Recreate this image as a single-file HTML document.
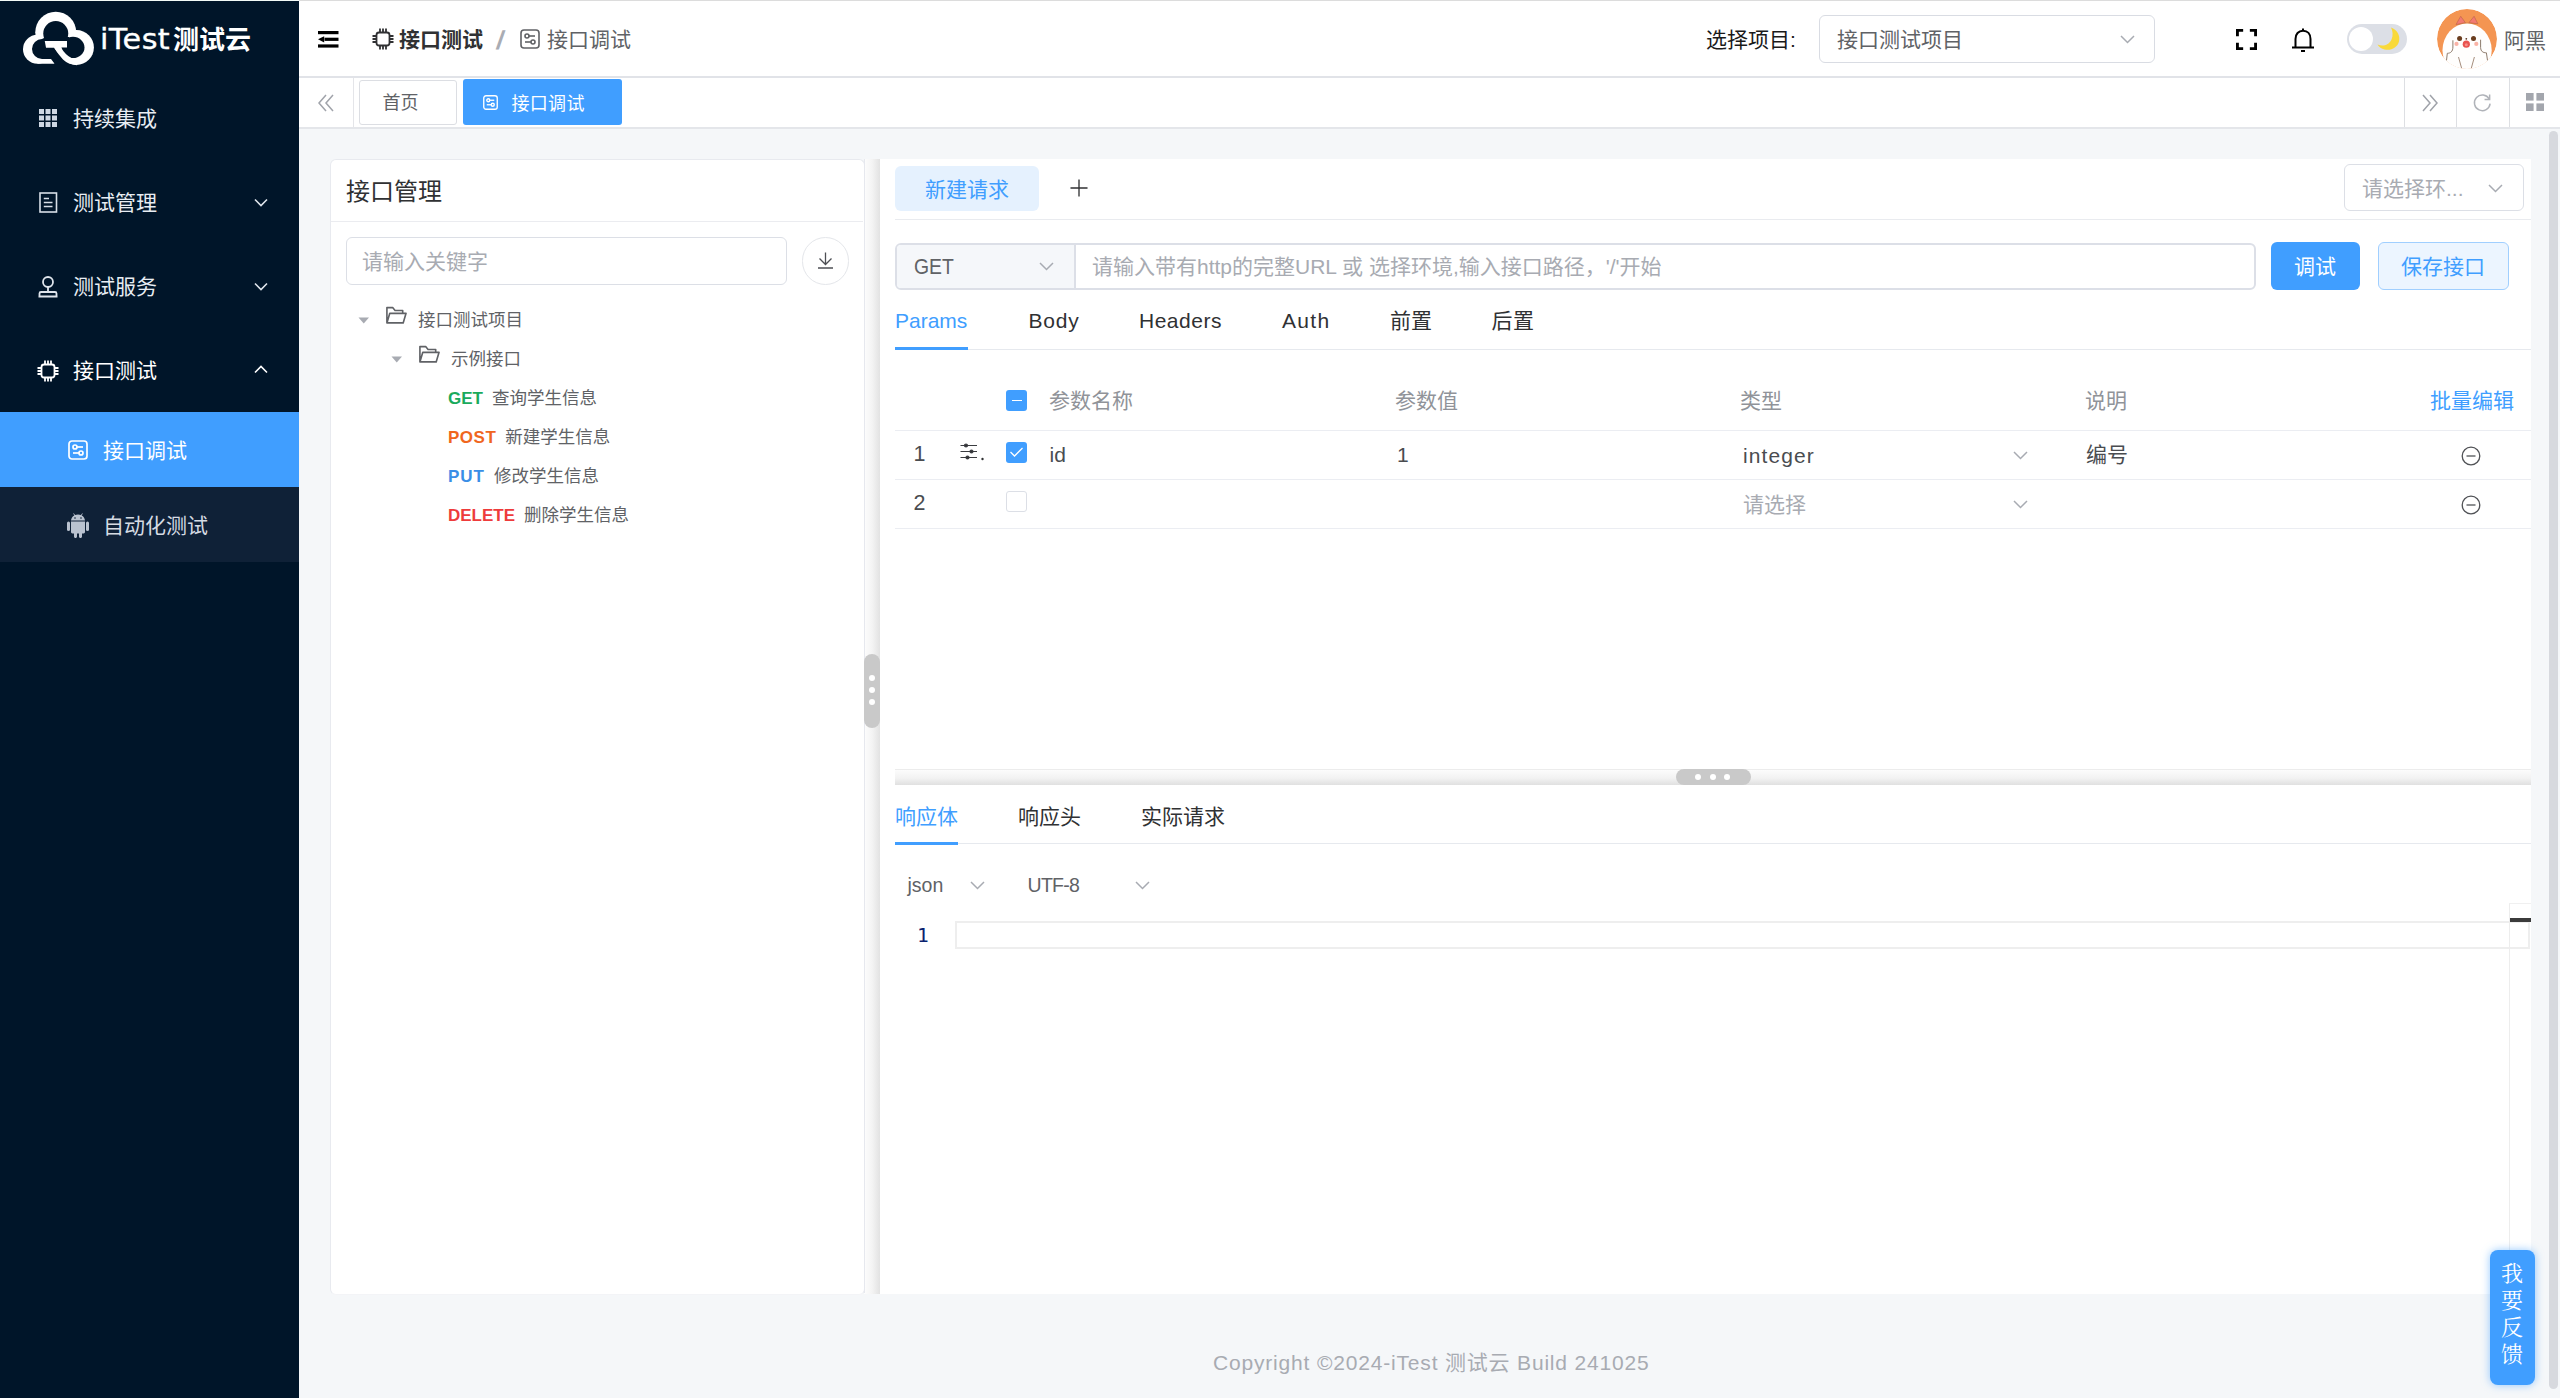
<!DOCTYPE html>
<html lang="zh-CN">
<head>
<meta charset="utf-8">
<title>iTest测试云 - 接口调试</title>
<style>
*{box-sizing:border-box;margin:0;padding:0}
html,body{width:2560px;height:1398px;overflow:hidden;background:#f5f7f9}
body{font-family:"Liberation Sans","Noto Sans CJK SC",sans-serif;font-size:21px;color:#606266;position:relative}
.abs{position:absolute}
.t{position:absolute;white-space:nowrap;line-height:1;}
svg{display:block;position:absolute;overflow:visible}
/* sidebar */
#side{position:absolute;left:0;top:0;width:299px;height:1398px;background:#001529}
#side .mi{position:absolute;left:0;width:299px;height:84px;color:#e8edf3;font-size:21px}
#side .mi .t{left:73px;top:32.300px}
#side .sub{position:absolute;left:0;width:299px;height:75px;background:#0f2137;color:#fff;font-size:21px}
#side .sub .t{left:103px;top:28.300px}
#side .sub.on{background:#409eff}
/* header */
#head{position:absolute;left:299px;top:0;width:2261px;height:77.500px;background:#fff;border-bottom:2px solid #e1e3e8}
#tabs{position:absolute;left:299px;top:77.500px;width:2261px;height:51.500px;background:#fff;border-bottom:2px solid #e4e6ea}

/* main */
#lcard{position:absolute;left:330px;top:159px;width:535px;height:1135.500px;background:#fff;border:1.500px solid #e8eaef;border-bottom-color:#f3f4f7;border-radius:6px}
#split{position:absolute;left:864px;top:159px;width:16px;height:1134.700px;background:linear-gradient(90deg,#fdfdfd 0%,#f4f4f4 50%,#e2e2e2 100%)}
#rp{position:absolute;left:880px;top:159px;width:1651px;height:1134.700px;background:#fff}
.tree{font-size:17.500px;color:#606266}
.tree b{font-size:17px}
.tree span{margin-left:8.500px}
.hl{position:absolute;height:1.500px;background:#e4e7ed}
.chev{fill:none;stroke:#a8abb2;stroke-width:1.500}
.mc{fill:none;stroke:#505256;stroke-width:1.300}
</style>
</head>
<body>
<!-- SIDEBAR -->
<div id="side">
  <!-- logo cloud -->
  <svg style="left:16px;top:4px" width="90" height="70" viewBox="0 0 90 70">
    <g fill="#fff"><circle cx="21.500" cy="45.300" r="14.500"/><circle cx="39.750" cy="28.250" r="20.500"/><circle cx="60.500" cy="43.500" r="17.400"/><path d="M21.500 50H35L38.600 59.800H21.500Z"/></g>
    <g fill="#001529"><circle cx="39.750" cy="29.500" r="12.500"/><path d="M16 45A10 10 0 0 1 26 35L30 33V43.500H38L42.500 50L47 55.500L52.500 59L50 62L38.600 59.800L35 55H26A10 10 0 0 1 16 45Z"/><ellipse cx="57" cy="43.400" rx="11.500" ry="10.600"/><path d="M45 33H53V38H45Z"/></g>
    <g fill="#fff"><path d="M28.750 37H51V43.500H30Z"/><path d="M38 43.400H45Q49 50.500 55.500 54L61 61.200Q52 60.500 47 55.500Q42 50 38 43.400Z"/></g>
  </svg>
  <div class="t" id="logotxt" style="left:100px;top:25.500px;color:#fff;font-size:26px"><span style="display:inline-block;font-family:'DejaVu Sans','Liberation Sans',sans-serif;font-size:27.500px;letter-spacing:0.400px;transform:scaleX(1.100);transform-origin:0 50%;-webkit-text-stroke:0.350px #fff">iTest</span><b style="margin-left:9.300px">测试云</b></div>

  <div class="mi" style="top:76px">
    <svg style="left:39px;top:33px" width="18" height="18" viewBox="0 0 18 18" fill="#cfd8e3"><rect x="0" y="0" width="5" height="5"/><rect x="6.500" y="0" width="5" height="5"/><rect x="13" y="0" width="5" height="5"/><rect x="0" y="6.500" width="5" height="5"/><rect x="6.500" y="6.500" width="5" height="5"/><rect x="13" y="6.500" width="5" height="5"/><rect x="0" y="13" width="5" height="5"/><rect x="6.500" y="13" width="5" height="5"/><rect x="13" y="13" width="5" height="5"/></svg>
    <div class="t">持续集成</div></div>
  <div class="mi" style="top:160px">
    <svg style="left:38.500px;top:31.500px" width="19" height="21" viewBox="0 0 19 21" fill="none" stroke="#d8dfe8" stroke-width="1.600"><rect x="1" y="1" width="16.500" height="19"/><path d="M4.800 6.500H10M4.800 10.500H13.500M4.800 14.500H13.500"/></svg>
    <div class="t">测试管理</div>
    <svg style="left:254px;top:38px" width="14" height="9" viewBox="0 0 14 9" fill="none" stroke="#dfe5ec" stroke-width="1.600"><path d="M1 1.500L7 7.500L13 1.500"/></svg></div>
  <div class="mi" style="top:244px">
    <svg style="left:38px;top:32px" width="20" height="22" viewBox="0 0 20 22" fill="none" stroke="#dfe5ec" stroke-width="1.800"><circle cx="10" cy="6" r="5"/><path d="M10 11V16M1.500 21V17.500C1.500 16.500 2 16 3 16H17C18 16 18.500 16.500 18.500 17.500V21M0.500 20.500H19.500"/></svg>
    <div class="t">测试服务</div>
    <svg style="left:254px;top:38px" width="14" height="9" viewBox="0 0 14 9" fill="none" stroke="#dfe5ec" stroke-width="1.600"><path d="M1 1.500L7 7.500L13 1.500"/></svg></div>
  <div class="mi" style="top:328px;color:#fff">
    <svg style="left:37px;top:32px" width="22" height="22" viewBox="0 0 22 22" fill="none" stroke="#fff" stroke-width="1.800"><rect x="4.500" y="4.500" width="13" height="13" rx="2.500"/><path d="M8 4V0.500M11 4V0.500M14 4V0.500M8 21.500V18M11 21.500V18M14 21.500V18M4 8H0.500M4 11H0.500M4 14H0.500M21.500 8H18M21.500 11H18M21.500 14H18"/></svg>
    <div class="t">接口测试</div>
    <svg style="left:254px;top:37px" width="14" height="9" viewBox="0 0 14 9" fill="none" stroke="#fff" stroke-width="1.600"><path d="M1 7.500L7 1.500L13 7.500"/></svg></div>
  <div class="sub on" style="top:412px">
    <svg style="left:68px;top:28px" width="20" height="20" viewBox="0 0 20 20" fill="none" stroke="#fff" stroke-width="1.700"><rect x="1" y="1" width="18" height="18" rx="3"/><circle cx="7" cy="7" r="2"/><path d="M9 7H15"/><circle cx="13" cy="13" r="2"/><path d="M5 13H11"/></svg>
    <div class="t">接口调试</div></div>
  <div class="sub" style="top:487px;color:#d5dbe3">
    <svg style="left:67px;top:26px" width="22" height="25" viewBox="0 0 22 25" fill="#b9c2cf"><path d="M4 8.500H18V19C18 19.800 17.400 20.400 16.600 20.400H15V23.500C15 24.300 14.400 25 13.500 25C12.600 25 12 24.300 12 23.500V20.400H10V23.500C10 24.300 9.400 25 8.500 25C7.600 25 7 24.300 7 23.500V20.400H5.400C4.600 20.400 4 19.800 4 19Z"/><path d="M4 7.500C4.200 5 5.500 3.300 7.300 2.400L6.200 0.600L6.800 0.200L8 2.100C8.900 1.800 9.900 1.600 11 1.600C12.100 1.600 13.100 1.800 14 2.100L15.200 0.200L15.800 0.600L14.700 2.400C16.500 3.300 17.800 5 18 7.500Z"/><rect x="0" y="8.500" width="3" height="9.500" rx="1.500"/><rect x="19" y="8.500" width="3" height="9.500" rx="1.500"/><circle cx="8" cy="5" r="0.800" fill="#0f2137"/><circle cx="14" cy="5" r="0.800" fill="#0f2137"/></svg>
    <div class="t">自动化测试</div></div>
</div>
<!-- HEADER -->
<div id="head">
  <!-- hamburger/fold -->
  <svg style="left:19.300px;top:31.200px" width="20.500" height="16.600" viewBox="0 0 20.500 16.600" fill="#000"><rect x="0" y="0" width="20.500" height="3.200"/><rect x="6.500" y="6.700" width="14" height="3.200"/><rect x="0" y="13.400" width="20.500" height="3.200"/><path d="M0 8.300L6.200 5.200V11.400Z"/></svg>
  <!-- breadcrumb -->
  <svg style="left:73px;top:28px" width="22" height="22" viewBox="0 0 22 22" fill="none" stroke="#303133" stroke-width="1.800"><rect x="4.500" y="4.500" width="13" height="13" rx="2.500"/><path d="M8 4V0.500M11 4V0.500M14 4V0.500M8 21.500V18M11 21.500V18M14 21.500V18M4 8H0.500M4 11H0.500M4 14H0.500M21.500 8H18M21.500 11H18M21.500 14H18"/></svg>
  <div class="t" style="left:100px;top:29px;font-weight:bold;color:#303133">接口测试</div>
  <div class="t" style="left:198px;top:27px;font-weight:bold;color:#a9acb3;font-size:26px;transform:skewX(-9deg)">/</div>
  <svg style="left:221px;top:29px" width="20" height="20" viewBox="0 0 20 20" fill="none" stroke="#606266" stroke-width="1.600"><rect x="1" y="1" width="18" height="18" rx="3"/><circle cx="7" cy="7" r="2"/><path d="M9 7H15"/><circle cx="13" cy="13" r="2"/><path d="M5 13H11"/></svg>
  <div class="t" style="left:248px;top:29px;color:#606266">接口调试</div>
  <!-- project select -->
  <div class="t" style="left:1407px;top:29px;color:#1a1a1a">选择项目:</div>
  <div class="abs" style="left:1520px;top:15px;width:336px;height:48px;border:1.500px solid #d9dce3;border-radius:6px;background:#fff"></div>
  <div class="t" style="left:1538px;top:29px;color:#606266">接口测试项目</div>
  <svg style="left:1821px;top:35px" width="15" height="9" viewBox="0 0 15 9" fill="none" stroke="#a8abb2" stroke-width="1.500"><path d="M1 1L7.500 7.500L14 1"/></svg>
  <!-- fullscreen -->
  <svg style="left:1937px;top:29px" width="21" height="21" viewBox="0 0 22 22" fill="none" stroke="#000" stroke-width="3"><path d="M1.500 7.500V1.500H7.500M14.500 1.500H20.500V7.500M20.500 14.500V20.500H14.500M7.500 20.500H1.500V14.500"/></svg>
  <!-- bell -->
  <svg style="left:1992px;top:27px" width="24" height="26" viewBox="0 0 24 26" fill="none" stroke="#000" stroke-width="2"><path d="M12 1.500V3.500M4.500 20V12C4.500 7 7.500 3.800 12 3.800C16.500 3.800 19.500 7 19.500 12V20M1 20.500H23M10 24H14"/></svg>
  <!-- switch -->
  <div class="abs" style="left:2048px;top:24px;width:60px;height:30px;border-radius:15px;background:#dcdfe6"></div>
  <div class="abs" style="left:2049.500px;top:27px;width:24px;height:24px;border-radius:12px;background:#fff"></div>
  <svg style="left:2078px;top:26px" width="26" height="26" viewBox="0 0 26 26"><path d="M14 1.500C20 3.500 23.500 9.500 22 15.500C20.500 21.500 14 25 7.500 23.500C4.500 22.800 2 21 0.500 18.500C6 21 12 19 14.500 13.500C16.300 9.500 15.800 5 14 1.500Z" fill="#f9d93a"/></svg>
  <!-- avatar -->
  <svg style="left:2138px;top:8.900px" width="60" height="60" viewBox="0 0 60 60">
    <defs><clipPath id="avc"><circle cx="30" cy="30" r="30"/></clipPath></defs>
    <g clip-path="url(#avc)">
      <circle cx="30" cy="30" r="30" fill="#f49552"/>
      <path d="M19 16L23.700 7.300L28.500 13.500L32 13.500L37.100 7.300L41 15Z" fill="#dd8546"/>
      <path d="M19 15.500L23.700 7.300L28.300 13.600ZM32 13.600L37.100 7.300L40.800 14.800Z" fill="#f37a72" stroke="#c66a4c" stroke-width="0.700" stroke-linejoin="round"/>
      <ellipse cx="30.100" cy="41.300" rx="24.600" ry="26.800" fill="#fffefd"/>
      <circle cx="22.600" cy="29.600" r="2.500" fill="#6b3d1e"/><circle cx="36.500" cy="29.600" r="2.500" fill="#6b3d1e"/>
      <circle cx="29.300" cy="29.800" r="0.900" fill="#5a3420"/>
      <circle cx="29.300" cy="35.200" r="3.600" fill="#e9534f"/><circle cx="29.300" cy="35.800" r="1.500" fill="#f58e86"/>
      <circle cx="19.500" cy="34.900" r="2.100" fill="#fab3a6"/><circle cx="39.300" cy="34.900" r="2.100" fill="#fab3a6"/>
      <path d="M15.900 31.300V38C15.900 42.500 13.500 44.300 10.300 44.300L9.500 51.400M43.600 30.700V38.500C43.800 42.500 46 43.800 49.400 43.800L50.500 51.400" fill="none" stroke="#8d7b6c" stroke-width="1"/>
      <path d="M21.500 48L24.600 59.200M37.400 48L34.300 59.200" fill="none" stroke="#a58d7c" stroke-width="1"/>
    </g>
  </svg>
  <div class="t" style="left:2205px;top:30px;color:#606266">阿黑</div>
</div>
<!-- TABBAR -->
<div id="tabs">
  <svg style="left:19.300px;top:16px" width="16" height="18" viewBox="0 0 16 18" fill="none" stroke="#a0a3aa" stroke-width="1.500"><path d="M8 1L1 9L8 17M15 1L8 9L15 17"/></svg>
  <div class="abs" style="left:53.500px;top:0;width:1.500px;height:49.500px;background:#e4e5e9"></div>
  <div class="abs" style="left:60px;top:2px;width:98px;height:45.500px;border:1.500px solid #dcdee3;border-radius:3px;background:#fff"></div>
  <div class="t" style="left:83.500px;top:16.500px;font-size:18px;color:#606266">首页</div>
  <div class="abs" style="left:164px;top:1.500px;width:159px;height:46px;border-radius:3px;background:#409eff"></div>
  <svg style="left:184px;top:17px" width="15" height="15" viewBox="0 0 20 20" fill="none" stroke="#fff" stroke-width="1.800"><rect x="1" y="1" width="18" height="18" rx="3"/><circle cx="7" cy="7" r="2"/><path d="M9 7H15"/><circle cx="13" cy="13" r="2"/><path d="M5 13H11"/></svg>
  <div class="t" style="left:212.500px;top:17px;font-size:18px;color:#fff;letter-spacing:0.300px">接口调试</div>
  <div class="abs" style="left:2105.200px;top:0;width:1.200px;height:49.500px;background:#dddfe3"></div>
  <div class="abs" style="left:2157.300px;top:0;width:1.200px;height:49.500px;background:#dddfe3"></div>
  <div class="abs" style="left:2210px;top:0;width:1.200px;height:49.500px;background:#dddfe3"></div>
  <svg style="left:2123px;top:16px" width="16" height="18" viewBox="0 0 16 18" fill="none" stroke="#a0a3aa" stroke-width="1.500"><path d="M1 1L8 9L1 17M8 1L15 9L8 17"/></svg>
  <svg style="left:2174px;top:15px" width="18.500" height="18.500" viewBox="0 0 20 20" fill="none" stroke="#b0b3b9" stroke-width="1.600"><path d="M17.500 6.500A8.500 8.500 0 1 0 18.500 11.500M18 1.500V7H12.500"/></svg>
  <svg style="left:2227.300px;top:15.500px" width="18" height="18" viewBox="0 0 18 18" fill="#a3a6ad"><rect x="0" y="0" width="7.600" height="7.600"/><rect x="10.400" y="0" width="7.600" height="7.600"/><rect x="0" y="10.400" width="7.600" height="7.600"/><rect x="10.400" y="10.400" width="7.600" height="7.600"/></svg>
</div>
<div class="abs" style="left:0;top:0;width:299px;height:1px;background:#f3faf7"></div><div class="abs" style="left:299px;top:0;width:2261px;height:1px;background:#dcdcdc"></div>
<!-- MAIN -->
<div id="main">
 <div id="lcard">
  <div class="t" style="left:15px;top:20px;font-size:24px;color:#303133">接口管理</div>
  <div class="hl" style="left:0;top:60.600px;width:532px;height:1.200px;background:#ebecf0"></div>
  <div class="abs" style="left:15px;top:77px;width:441px;height:47.500px;border:1.500px solid #dcdfe6;border-radius:6px"></div>
  <div class="t" style="left:31px;top:90.500px;color:#a8abb2">请输入关键字</div>
  <div class="abs" style="left:470.500px;top:77px;width:47.500px;height:47.500px;border:1.500px solid #e4e6ea;border-radius:24px"></div>
  <svg style="left:486px;top:92px" width="18" height="18" viewBox="0 0 18 18" fill="none" stroke="#4d4f54" stroke-width="1.300"><path d="M8.500 0.500V12M2.500 6.500L8.500 12.500L14.500 6.500M1 16H16"/></svg>
  <div class="tree">
   <svg style="left:27px;top:156.800px" width="11.500" height="7" viewBox="0 0 13 8" fill="#a8abb2"><path d="M0.500 0.500H12.500L6.500 7.500Z"/></svg>
   <svg class="fold" style="left:54.300px;top:146.300px" width="22" height="18.500" viewBox="0 0 23 19" fill="none" stroke="#606266" stroke-width="1.700" stroke-linejoin="round"><path d="M2 17.500V1.500H8L10.500 4.500H18.500V7.500M2 17.500L5 7.500H22L19 17.500Z"/></svg>
   <div class="t" style="left:87px;top:152px">接口测试项目</div>
   <svg style="left:60px;top:195.800px" width="11.500" height="7" viewBox="0 0 13 8" fill="#a8abb2"><path d="M0.500 0.500H12.500L6.500 7.500Z"/></svg>
   <svg class="fold" style="left:87.300px;top:185.300px" width="22" height="18.500" viewBox="0 0 23 19" fill="none" stroke="#606266" stroke-width="1.700" stroke-linejoin="round"><path d="M2 17.500V1.500H8L10.500 4.500H18.500V7.500M2 17.500L5 7.500H22L19 17.500Z"/></svg>
   <div class="t" style="left:120px;top:191px">示例接口</div>
   <div class="t" style="left:117px;top:230px"><b style="color:#1aaa5c">GET</b><span style="margin-left:9px">查询学生信息</span></div>
   <div class="t" style="left:117px;top:269px"><b style="color:#f0661e;letter-spacing:0.500px">POST</b><span style="margin-left:9px">新建学生信息</span></div>
   <div class="t" style="left:117px;top:308px"><b style="color:#3a8ee6;letter-spacing:1px">PUT</b><span style="margin-left:9px">修改学生信息</span></div>
   <div class="t" style="left:117px;top:347px"><b style="color:#ee3b3b">DELETE</b><span style="margin-left:9px">删除学生信息</span></div>
  </div>
 </div>
 <div id="split">
  <div class="abs" style="left:0;top:0;width:1.200px;height:1134px;background:#e6e8ee"></div>
  <div class="abs" style="left:0;top:495px;width:16px;height:74px;border-radius:8px;background:#c9c9c9"></div>
  <div class="abs" style="left:5px;top:516px;width:6px;height:6px;border-radius:3px;background:#fff"></div>
  <div class="abs" style="left:5px;top:528px;width:6px;height:6px;border-radius:3px;background:#fff"></div>
  <div class="abs" style="left:5px;top:540px;width:6px;height:6px;border-radius:3px;background:#fff"></div>
 </div>
 <div id="rp">
  <!-- request tabs -->
  <div class="abs" style="left:15px;top:7px;width:144px;height:45px;border-radius:6px;background:#e5f1fe"></div>
  <div class="t" style="left:45px;top:19.800px;color:#409eff">新建请求</div>
  <svg style="left:189.500px;top:20px" width="18" height="18" viewBox="0 0 19 19" fill="none" stroke="#303133" stroke-width="1.400"><path d="M9.500 0.500V18.500M0.500 9.500H18.500"/></svg>
  <div class="hl" style="left:15px;top:60px;width:1636px;height:1.200px;background:#e9ebef"></div>
  <div class="abs" style="left:1464px;top:5px;width:180px;height:47px;border:1.500px solid #dcdfe6;border-radius:6px"></div>
  <div class="t" style="left:1482px;top:19px;color:#a8abb2">请选择环...</div>
  <svg style="left:1608px;top:25px" width="15" height="9" viewBox="0 0 15 9"><path class="chev" d="M1 1L7.500 7.500L14 1"/></svg>
  <!-- url row -->
  <div class="abs" style="left:15px;top:83.500px;width:1361px;height:47.500px;border:2px solid #dcdfe7;border-radius:6px;background:#fff"></div>
  <div class="abs" style="left:17px;top:85.500px;width:179px;height:43.500px;border-right:2px solid #dcdfe7;border-radius:4px 0 0 4px;background:#f5f7fa"></div>
  <div class="t" style="left:33.500px;top:96.500px;color:#606266;font-size:22.500px;transform:scaleX(0.860);transform-origin:0 50%">GET</div>
  <svg style="left:159px;top:103px" width="15" height="9" viewBox="0 0 15 9"><path class="chev" d="M1 1L7.500 7.500L14 1"/></svg>
  <div class="t" style="left:212px;top:97px;color:#a8abb2">请输入带有http的完整URL 或 选择环境,输入接口路径，'/'开始</div>
  <div class="abs" style="left:1391px;top:83px;width:89px;height:48px;border-radius:6px;background:#409eff"></div>
  <div class="t" style="left:1414px;top:97px;color:#fff">调试</div>
  <div class="abs" style="left:1498px;top:83px;width:131px;height:48px;border-radius:6px;background:#ecf5ff;border:1.500px solid #a0cfff"></div>
  <div class="t" style="left:1521px;top:97px;color:#409eff">保存接口</div>
  <!-- param tabs -->
  <div class="t" style="left:15px;top:151px;color:#409eff">Params</div>
  <div class="t" style="left:148.500px;top:151px;color:#303133;letter-spacing:0.800px">Body</div>
  <div class="t" style="left:259px;top:151px;color:#303133;letter-spacing:0.500px">Headers</div>
  <div class="t" style="left:402px;top:151px;color:#303133;letter-spacing:1.300px">Auth</div>
  <div class="t" style="left:510px;top:151px;color:#303133">前置</div>
  <div class="t" style="left:611.500px;top:151px;color:#303133;letter-spacing:0.500px">后置</div>
  <div class="hl" style="left:15px;top:189.500px;width:1636px;height:1.200px;background:#e6e9ee"></div>
  <div class="abs" style="left:15px;top:187.700px;width:73px;height:3px;background:#409eff"></div>
  <!-- table -->
  <div class="abs" style="left:126px;top:231px;width:21px;height:21px;border-radius:3px;background:#409eff"></div>
  <div class="abs" style="left:131.500px;top:240.500px;width:10px;height:1.700px;background:#fff"></div>
  <div class="t" style="left:169px;top:231px;color:#909399">参数名称</div>
  <div class="t" style="left:515px;top:231px;color:#909399">参数值</div>
  <div class="t" style="left:860px;top:231px;color:#909399">类型</div>
  <div class="t" style="left:1205px;top:231px;color:#909399">说明</div>
  <div class="t" style="left:1550px;top:231px;color:#409eff">批量编辑</div>
  <div class="hl" style="left:15px;top:271px;width:1636px;height:1.200px;background:#ebedf2"></div>
  <div class="t" style="left:33.500px;top:284.500px;font-size:21.500px;color:#4a4c50">1</div>
  <svg style="left:80px;top:284px" width="26" height="18" viewBox="0 0 26 18" fill="none" stroke="#3a3c40" stroke-width="1.150"><path d="M0.500 2.500H17M0.500 8.500H17M0.500 14.500H17"/><circle cx="6" cy="2.500" r="1.500" fill="#303133"/><circle cx="11.500" cy="8.500" r="1.500" fill="#303133"/><circle cx="7.500" cy="14.500" r="1.500" fill="#303133"/><circle cx="22.500" cy="16" r="1.200" fill="#303133" stroke="none"/></svg>
  <div class="abs" style="left:126px;top:283px;width:21px;height:21px;border-radius:3px;background:#409eff"></div>
  <svg style="left:129px;top:287px" width="15" height="12" viewBox="0 0 15 12" fill="none" stroke="#fff" stroke-width="1.250"><path d="M1.500 6L5.500 10L13.500 2"/></svg>
  <div class="t" style="left:169.500px;top:285px;color:#4a4c50">id</div>
  <div class="t" style="left:517px;top:284.700px;color:#4a4c50">1</div>
  <div class="t" style="left:863px;top:286px;color:#4a4c50;letter-spacing:1.100px">integer</div>
  <svg style="left:1133px;top:292px" width="15" height="9" viewBox="0 0 15 9"><path class="chev" d="M1 1L7.500 7.500L14 1"/></svg>
  <div class="t" style="left:1206px;top:285px;color:#4a4c50">编号</div>
  <svg style="left:1581px;top:287px" width="20" height="20" viewBox="0 0 20 20"><circle class="mc" cx="10" cy="10" r="8.800"/><path class="mc" d="M5.500 10H14.500"/></svg>
  <div class="hl" style="left:15px;top:320px;width:1636px;height:1.200px;background:#ebedf2"></div>
  <div class="t" style="left:33.500px;top:333.500px;font-size:21.500px;color:#4a4c50">2</div>
  <div class="abs" style="left:126px;top:332px;width:21px;height:21px;border-radius:3px;background:#fff;border:1.500px solid #dcdfe6"></div>
  <div class="t" style="left:863px;top:335px;color:#a8abb2">请选择</div>
  <svg style="left:1133px;top:341px" width="15" height="9" viewBox="0 0 15 9"><path class="chev" d="M1 1L7.500 7.500L14 1"/></svg>
  <svg style="left:1581px;top:336px" width="20" height="20" viewBox="0 0 20 20"><circle class="mc" cx="10" cy="10" r="8.800"/><path class="mc" d="M5.500 10H14.500"/></svg>
  <div class="hl" style="left:15px;top:369px;width:1636px;height:1.200px;background:#ebedf2"></div>
  <!-- horizontal splitter -->
  <div class="abs" style="left:15px;top:610px;width:1636px;height:16px;border-top:1.500px solid #ececec;background:linear-gradient(180deg,#fcfcfc 0%,#f2f2f2 55%,#e0e0e0 100%)"></div>
  <div class="abs" style="left:796px;top:610px;width:75px;height:16px;border-radius:8px;background:#c9c9c9"></div>
  <div class="abs" style="left:815px;top:615px;width:6px;height:6px;border-radius:3px;background:#fff"></div>
  <div class="abs" style="left:830px;top:615px;width:6px;height:6px;border-radius:3px;background:#fff"></div>
  <div class="abs" style="left:844px;top:615px;width:6px;height:6px;border-radius:3px;background:#fff"></div>
  <!-- response tabs -->
  <div class="t" style="left:15px;top:647px;color:#409eff">响应体</div>
  <div class="t" style="left:138px;top:647px;color:#303133">响应头</div>
  <div class="t" style="left:261px;top:647px;color:#303133">实际请求</div>
  <div class="hl" style="left:15px;top:684.300px;width:1636px;height:1.200px;background:#e6e9ee"></div>
  <div class="abs" style="left:15px;top:683px;width:63px;height:3px;background:#409eff"></div>
  <div class="t" style="left:27.500px;top:717px;font-size:19.500px;color:#606266">json</div>
  <svg style="left:89.500px;top:721.500px" width="15" height="9" viewBox="0 0 15 9"><path class="chev" d="M1 1L7.500 7.500L14 1"/></svg>
  <div class="t" style="left:147.500px;top:717px;font-size:19.500px;color:#606266;letter-spacing:-0.700px">UTF-8</div>
  <svg style="left:1255px;top:722px;left:255px" width="15" height="9" viewBox="0 0 15 9"><path class="chev" d="M1 1L7.500 7.500L14 1"/></svg>
  <!-- editor -->
  <div class="t" style="left:37px;top:767px;font-size:19.500px;color:#0b216f;font-family:'DejaVu Sans Mono','Liberation Mono',monospace">1</div>
  <div class="abs" style="left:74.500px;top:762px;width:1575px;height:28px;border:2.500px solid #eeeeee"></div>
  <div class="abs" style="left:1629px;top:744px;width:22px;height:390px;border-left:1.500px solid #ededed;border-top:1.500px solid #f0f0f0"></div>
  <div class="abs" style="left:1630px;top:759.300px;width:21px;height:4px;background:#3b3b3b"></div>
 </div>
 <!-- page scrollbar -->
 <div class="abs" style="left:2549px;top:131px;width:9px;height:1258px;border-radius:5px;background:#d7d9de"></div>
 <!-- footer -->
 <div class="t" style="left:1213px;top:1352px;color:#a8abb2;letter-spacing:0.820px">Copyright ©2024-iTest 测试云 Build 241025</div>
 <!-- feedback -->
 <div class="abs" style="left:2490px;top:1250px;width:45px;height:135px;border-radius:8px;background:#409eff;box-shadow:0 0 9px rgba(64,158,255,.55)"></div>
 <div class="t" style="left:2501px;top:1259.500px;width:23px;white-space:normal;line-height:27px;font-size:22px;color:#fff;font-family:'Liberation Serif','Noto Serif CJK SC',serif">我要反馈</div>
</div>
</body>
</html>
